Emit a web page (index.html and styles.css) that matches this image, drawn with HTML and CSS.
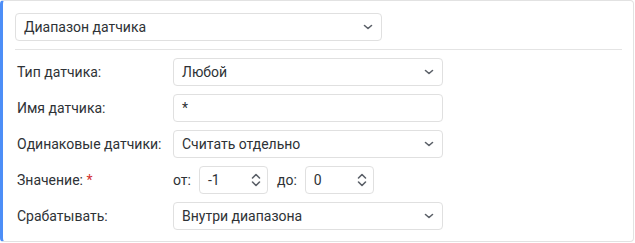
FILE: index.html
```html
<!DOCTYPE html>
<html lang="ru">

<head>
  <meta charset="UTF-8" />
  <title>Диапазон датчика</title>
  <link rel="stylesheet" href="styles.css">
</head>

<body>
  <div class="card">

    <div class="field select top-select">
      <span>Диапазон датчика</span>
      <svg class="chevron" width="10" height="6" viewBox="0 0 10 6"><path d="M1.5 1.5l3.5 3 3.5-3" /></svg>
    </div>

    <div class="divider"></div>

    <div class="form">
      <div class="row">
        <label>Тип датчика:</label>
        <div class="field select wide">
          <span>Любой</span>
          <svg class="chevron" width="10" height="6" viewBox="0 0 10 6"><path d="M1.5 1.5l3.5 3 3.5-3" /></svg>
        </div>
      </div>

      <div class="row">
        <label>Имя датчика:</label>
        <div class="field wide"><span>*</span></div>
      </div>

      <div class="row">
        <label>Одинаковые датчики:</label>
        <div class="field select wide">
          <span>Считать отдельно</span>
          <svg class="chevron" width="10" height="6" viewBox="0 0 10 6"><path d="M1.5 1.5l3.5 3 3.5-3" /></svg>
        </div>
      </div>

      <div class="row">
        <label>Значение: <b class="req">*</b></label>
        <div class="range">
          <span class="range-label">от:</span>
          <div class="field number">
            <span>-1</span>
            <svg class="spin" width="10" height="14" viewBox="0 0 10 14"><path d="M1.5 5l3.5-3.5 3.5 3.5M1.5 9l3.5 3.5 3.5-3.5" /></svg>
          </div>
          <span class="range-label">до:</span>
          <div class="field number">
            <span>0</span>
            <svg class="spin" width="10" height="14" viewBox="0 0 10 14"><path d="M1.5 5l3.5-3.5 3.5 3.5M1.5 9l3.5 3.5 3.5-3.5" /></svg>
          </div>
        </div>
      </div>

      <div class="row">
        <label>Срабатывать:</label>
        <div class="field select wide">
          <span>Внутри диапазона</span>
          <svg class="chevron" width="10" height="6" viewBox="0 0 10 6"><path d="M1.5 1.5l3.5 3 3.5-3" /></svg>
        </div>
      </div>
    </div>

  </div>
</body>

</html>
```

FILE: styles.css
```css
body {
  font-family: Roboto, 'Liberation Sans', sans-serif;
  font-size: 14px;
  color: #2e3236;
  margin: 0;
  background-color: #fff;
}

.card {
  width: 634px;
  height: 242px;
  box-sizing: border-box;
  background: #fff;
  border: 1px solid #e2e2e2;
  border-left: 3px solid #4d8ef7;
  border-radius: 4px;
  padding: 12px 11px 12px 12px;
}

.field {
  box-sizing: border-box;
  height: 28px;
  border: 1px solid #e0e0e0;
  border-radius: 4px;
  padding: 0 8px;
  display: flex;
  align-items: center;
  justify-content: space-between;
  background: #fff;
  flex-shrink: 0;
}

.top-select {
  width: 367px;
}

.chevron,
.spin {
  fill: none;
  stroke: #5b6068;
  stroke-width: 1.6;
  stroke-linecap: round;
  stroke-linejoin: round;
}

.divider {
  height: 1px;
  background: #e4e4e4;
  margin: 8px 0 8px 0;
}

.form {
  display: flex;
  flex-direction: column;
  gap: 8px;
}

.row {
  display: flex;
  align-items: center;
  height: 28px;
}

.row label {
  width: 158px;
  flex-shrink: 0;
  padding-left: 2px;
  box-sizing: border-box;
}

.req {
  color: #d32f2f;
  font-weight: normal;
}

.wide {
  width: 270px;
}

.range {
  display: flex;
  align-items: center;
}

.range-label {
  margin-right: 8px;
}

.range-label + .field {
  margin-right: 9px;
}

.number {
  width: 69px;
  padding-right: 6px;
}
```
